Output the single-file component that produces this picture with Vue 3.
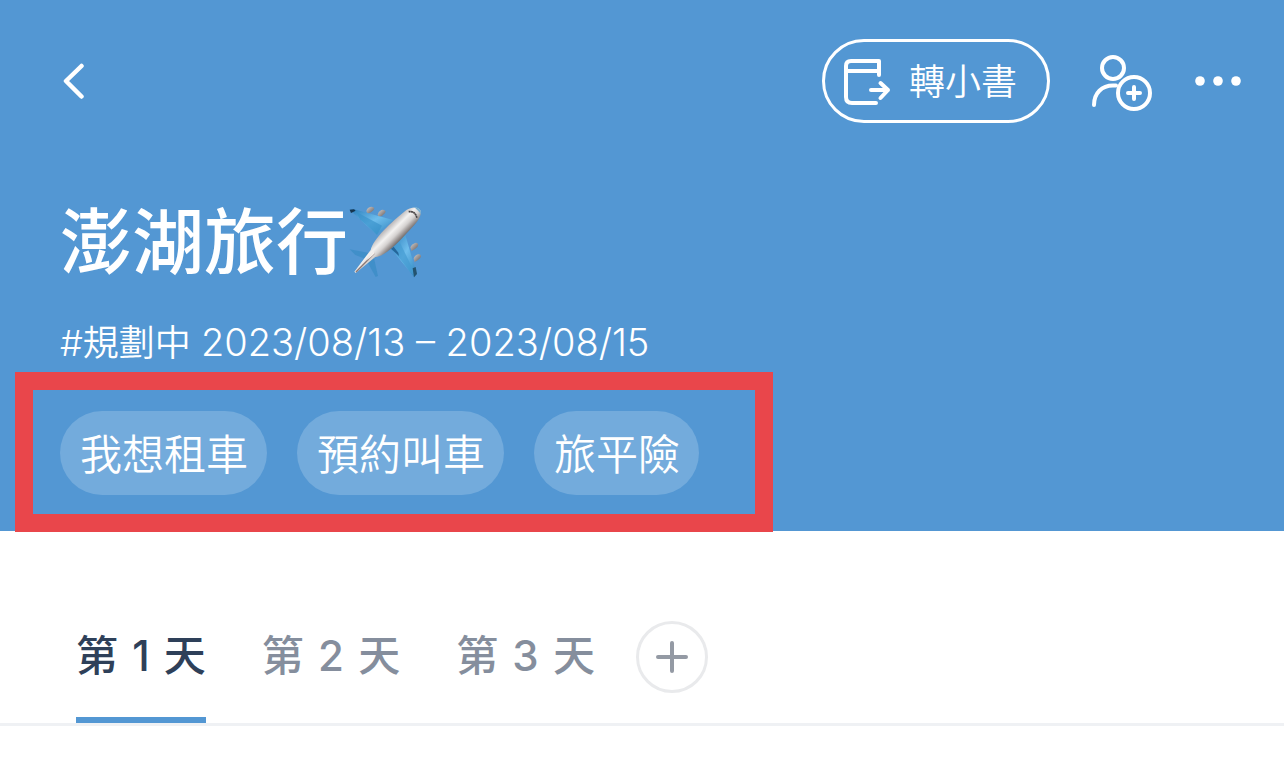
<script setup>
import { ref } from 'vue'

const services = ['我想租車', '預約叫車', '旅平險']
const days = ref([1, 2, 3])
const activeDay = ref(1)
</script>

<template>
  <main class="page">
    <header class="hero">
      <div class="toolbar">
        <button class="icon-button back" type="button" aria-label="返回">
          <svg width="24" height="40" viewBox="0 0 24 40" fill="none" stroke="#fff" stroke-width="4.500" stroke-linecap="round" stroke-linejoin="round">
            <path d="M21.500 5 6 20l15.500 15.500" />
          </svg>
        </button>
        <button class="convert" type="button">
          <svg width="48" height="50" viewBox="0 0 48 50" fill="none" stroke="#fff" stroke-width="4" stroke-linecap="round" stroke-linejoin="round">
            <path d="M36 19V5H8Q3 5 3 10v31q0 6 6 6h24M3 15h33M3 15v-5" />
            <path d="M28 34h17M37.500 27l7.500 7-7.500 8" />
          </svg>
          <span>轉小書</span>
        </button>
        <button class="icon-button invite" type="button" aria-label="新增旅伴">
          <svg width="62" height="62" viewBox="0 -2 62 62" fill="none" stroke="#fff" stroke-width="4" stroke-linecap="round">
            <circle cx="22" cy="16" r="11" />
            <path d="M3 53C3 41 11 33.500 22 33.500h3" />
            <circle cx="43" cy="41" r="16" />
            <path d="M43 35v12M37 41h12" />
          </svg>
        </button>
        <button class="icon-button more" type="button" aria-label="更多">
          <svg width="48" height="12" viewBox="0 0 48 12" fill="#fff">
            <circle cx="6" cy="6" r="4.800" />
            <circle cx="24" cy="6" r="4.800" />
            <circle cx="42" cy="6" r="4.800" />
          </svg>
        </button>
      </div>

      <h1 class="title">
        <span>澎湖旅行</span>
        <svg width="74" height="80" viewBox="24 21 222 240" role="img" aria-label="飛機">
          <defs>
            <linearGradient id="wing" x1="0" y1="0" x2="1" y2="1">
              <stop offset="0" stop-color="#2a7dbb" />
              <stop offset=".5" stop-color="#6ebdec" />
              <stop offset="1" stop-color="#2d83bd" />
            </linearGradient>
            <linearGradient id="body" gradientUnits="userSpaceOnUse" x1="145" y1="90" x2="185" y2="130">
              <stop offset="0" stop-color="#b4b1b2" />
              <stop offset=".38" stop-color="#f4f2f1" />
              <stop offset=".65" stop-color="#d5d2d1" />
              <stop offset="1" stop-color="#77706f" />
            </linearGradient>
            <linearGradient id="engine" x1="0" y1="0" x2="1" y2="1">
              <stop offset="0" stop-color="#d5d0cf" />
              <stop offset="1" stop-color="#5d5656" />
            </linearGradient>
          </defs>
          <g fill="url(#engine)">
            <path d="M79 49q1-9 11-13 10-2 13 4 0 7-9 11l-11 6Z" />
            <path d="M113 59q1-9 11-14 10-2 13 4 0 7-9 12l-11 6Z" />
            <path d="M211 157q3-9 14-13 8-2 10 5-1 7-9 12l-11 7Z" />
            <path d="M221 191q2-9 13-13 8-2 9 5 0 7-9 12l-10 6Z" />
          </g>
          <path d="M29 44 42 43 159 75 110 119Z" fill="url(#wing)" />
          <path d="m29 44 13-1 5 4-14 7Z" fill="#15354f" />
          <path d="m48 50 78 42-15 27-51-46" fill="#3890ca" opacity=".65" />
          <path d="m153 161 42-44 35 119-8 10Z" fill="url(#wing)" />
          <path d="m158 165 22-22 38 78 4 23Z" fill="#459bd1" opacity=".7" />
          <path d="m153 161 8-6 14 18 2 10Z" fill="#25669a" />
          <path d="m218 220 9-4 4 21-9 10Z" fill="#24536f" />
          <path d="m29 163 63 12-17 16-29-11ZM80 197l21-12 13 58-7 3Z" fill="#398bc4" opacity=".7" />
          <path d="M92 165C101 130 151 84 199 45 216 34 236 35 242 47c3 18-11 35-28 53-39 42-75 83-108 86L47 234l-4-4Z" fill="url(#body)" />
          <path d="M222 36q15 1 20 11l1 10-11-12Z" fill="#76aed2" />
          <path d="M206 50q19-3 25 19" fill="none" stroke="#484243" stroke-width="5" stroke-dasharray="6 1" />
          <path d="m104 174-56 57" stroke="#8c7772" stroke-width="4" />
          <path d="m101 168 4 7-26 23Z" fill="#f4efec" />
        </svg>
      </h1>
      <p class="dates">#規劃中 <span class="range">2023/08/13 – 2023/08/15</span></p>

      <div class="services">
        <button v-for="service in services" :key="service" class="service" type="button">{{ service }}</button>
      </div>
    </header>

    <nav class="days" aria-label="行程日期">
      <button
        v-for="day in days"
        :key="day"
        type="button"
        class="day"
        :class="{ active: day === activeDay }"
        @click="activeDay = day"
      >第 <span class="number">{{ day }}</span> 天</button>
      <button class="add" type="button" aria-label="新增一天" @click="days.push(days.length + 1)">
        <svg width="36" height="36" viewBox="0 0 36 36" stroke="#949aa4" stroke-width="4" stroke-linecap="round">
          <path d="M18 4v28M4 18h28" />
        </svg>
      </button>
    </nav>
  </main>
</template>

<style>
body {
  margin: 0;
  background: #fff;
}
</style>

<style scoped>
.page {
  font-family: Inter, "Noto Sans CJK TC", sans-serif;
}

button {
  margin: 0;
  padding: 0;
  border: 0;
  background: none;
  color: inherit;
  font: inherit;
  cursor: pointer;
}

svg {
  display: block;
  flex: none;
}

.hero {
  display: flow-root;
  padding-top: 39px;
  background: #5397d3;
  color: #fff;
}

.toolbar {
  display: flex;
  align-items: center;
  padding: 0 42px 0 60px;
}

.back {
  margin-right: auto;
}

.convert {
  display: flex;
  align-items: center;
  gap: 18px;
  box-sizing: border-box;
  height: 84px;
  padding: 0 30px 0 18px;
  border: 3px solid #fff;
  border-radius: 42px;
  font-size: 36px;
  font-weight: 350;
}

.convert span {
  padding-bottom: 4px;
}

.invite {
  margin-left: 41px;
}

.more {
  margin-left: 41px;
}

.title {
  display: flex;
  align-items: center;
  margin: 69px 60px 0;
  font-size: 72px;
  font-weight: 500;
  line-height: 100px;
}

.dates {
  margin: 24px 60px 0;
  padding-bottom: 2px;
  font-size: 36px;
  font-weight: 350;
  line-height: 54px;
}

.range {
  font-size: 38px;
  line-height: 1;
}

.services {
  display: flex;
  flex-wrap: wrap;
  gap: 30px;
  box-sizing: border-box;
  width: fit-content;
  max-width: calc(100% - 30px);
  margin: 0 15px -1px;
  padding: 21px 56px 19px 27px;
  border: 18px solid #e9464b;
}

.service {
  height: 84px;
  padding: 0 19px 4px 20px;
  border-radius: 42px;
  background: #73abdc;
  font-size: 42px;
  font-weight: 350;
}

.days {
  display: flex;
  align-items: flex-start;
  gap: 56px;
  padding: 90px 76px 0;
  border-bottom: 3px solid #eff1f4;
}

.day {
  height: 102px;
  box-sizing: border-box;
  padding-bottom: 26px;
  border-bottom: 6px solid transparent;
  color: #858e9d;
  font-size: 42px;
  font-weight: 500;
  line-height: 70px;
  white-space: nowrap;
}

.number {
  padding: 0 3px;
}

.day.active {
  border-bottom-color: #5397d3;
  color: #2e4059;
}

.add {
  display: grid;
  place-items: center;
  box-sizing: border-box;
  width: 72px;
  height: 72px;
  margin-left: -15px;
  border: 3px solid #e9eaec;
  border-radius: 50%;
}
</style>
